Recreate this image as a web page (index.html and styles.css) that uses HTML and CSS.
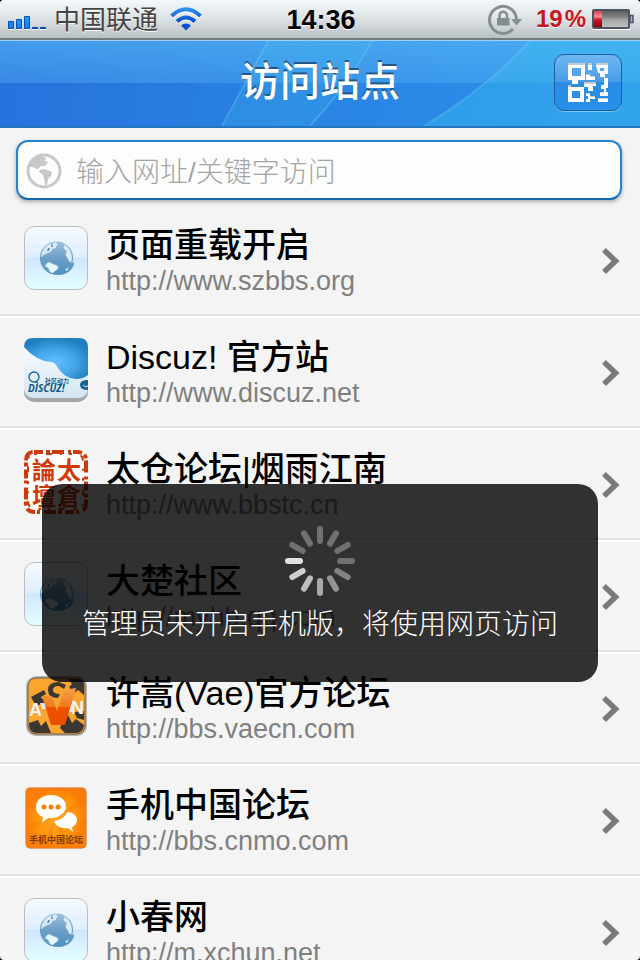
FILE: index.html
```html
<!DOCTYPE html>
<html lang="zh-CN">
<head>
  <meta charset="UTF-8" />
  <meta name="viewport" content="width=device-width, initial-scale=1.0"/>
  <title>访问站点</title>
  <link rel="stylesheet" href="styles.css">
</head>
<body>

<svg class="defs" aria-hidden="true">
  <defs>
    <linearGradient id="tile" x1="0" y1="0" x2="0" y2="1">
      <stop offset="0" stop-color="#f6faff"/>
      <stop offset=".48" stop-color="#dfeeff"/>
      <stop offset=".5" stop-color="#cfe6ff"/>
      <stop offset="1" stop-color="#e4ffff"/>
    </linearGradient>
    <linearGradient id="globe" x1="0" y1="0" x2="0" y2="1">
      <stop offset="0" stop-color="#9cc0da"/>
      <stop offset=".5" stop-color="#6c9fc6"/>
      <stop offset="1" stop-color="#4f90bd"/>
    </linearGradient>
    <radialGradient id="drop" cx=".48" cy=".6" r=".6">
      <stop offset="0" stop-color="#62c0ff"/>
      <stop offset=".5" stop-color="#46a8ea"/>
      <stop offset="1" stop-color="#1f7fbf"/>
    </radialGradient>
    <linearGradient id="pale" x1="0" y1="0" x2="0" y2="1">
      <stop offset="0" stop-color="#ffffff"/>
      <stop offset="1" stop-color="#d3e6f3"/>
    </linearGradient>
    <linearGradient id="vee" x1="0" y1="0" x2="0" y2="1">
      <stop offset="0" stop-color="#f5a04a"/>
      <stop offset=".5" stop-color="#f07a1c"/>
      <stop offset=".52" stop-color="#ee5200"/>
      <stop offset="1" stop-color="#e84e00"/>
    </linearGradient>
    <radialGradient id="orange">
      <stop offset="0" stop-color="#ffa92a"/>
      <stop offset=".7" stop-color="#ff9408"/>
      <stop offset="1" stop-color="#fb7d0a"/>
    </radialGradient>
    <linearGradient id="bar" x1="0" y1="0" x2="0" y2="1">
      <stop offset="0" stop-color="#1f9cff"/>
      <stop offset="1" stop-color="#1a7cf0"/>
    </linearGradient>
    <linearGradient id="wave" x1="0" y1="0" x2="0" y2="1">
      <stop offset="0" stop-color="#2f8ee6"/>
      <stop offset="1" stop-color="#0a4fd0"/>
    </linearGradient>
    <linearGradient id="cell" x1="0" y1="0" x2="0" y2="1">
      <stop offset="0" stop-color="#555"/>
      <stop offset=".45" stop-color="#8a8a8a"/>
      <stop offset=".5" stop-color="#a2a2a2"/>
      <stop offset="1" stop-color="#c4c4c4"/>
    </linearGradient>
    <linearGradient id="charge" x1="0" y1="0" x2="0" y2="1">
      <stop offset="0" stop-color="#d84050"/>
      <stop offset=".35" stop-color="#ff8b96"/>
      <stop offset=".55" stop-color="#c11722"/>
      <stop offset="1" stop-color="#8c0008"/>
    </linearGradient>
  </defs>

  <symbol id="site" viewBox="0 0 64 64">
    <rect x=".5" y=".5" width="63" height="63" rx="10" fill="url(#tile)" stroke="#b9bcc0"/>
    <circle cx="32.500" cy="32" r="16" fill="#dcebf8" stroke="url(#globe)" stroke-width="1.200"/>
    <path fill="url(#globe)" d="M16.500 32l3-3 4-2 3-1 2-3 3-1 2-4-2-2 7 0 2 3-1 3 3 3-1 4 2 3 2 4 3 1 2-1q-1 7-7 10.500-9 5-17.500 0Q17 41 16.500 32z"/>
    <path fill="url(#globe)" d="M27 18l2-1 0 4-2 0zM24 22l2 0-1 3-2 0z"/>
    <path fill="#e6f6ff" d="M22 38l3-2 4 2 5 2 0 3-3 2-2 2-3-1-2-4-3-2zM41 44l4-3-2 4z"/>
  </symbol>

  <symbol id="chevron" viewBox="0 0 18 26">
    <path d="M2 2 13.500 13 2 24" fill="none" stroke="#7a7a7a" stroke-width="5.500"/>
  </symbol>
</svg>

<div class="screen">

  <div class="status">
    <div class="status-side">
      <svg class="signal" viewBox="0 0 38 16" aria-hidden="true">
        <g fill="url(#bar)" stroke="#0c4fae">
          <path d="M.5 6.500h5v7H.5zM8.500 4.500h5v9h-5zM16.500 1.500h5v12h-5z"/>
        </g>
        <path fill="#0b47b5" d="M24 12h6v2h-6zM32 12h6v2h-6z"/>
        <path fill="#fff" d="M0 14h6v1H0zM8 14h6v1H8zM16 14h6v1h-6zM24 14h6v1h-6zM32 14h6v1h-6z"/>
      </svg>
      <span class="carrier">中国联通</span>
      <svg class="wifi" viewBox="0 0 32 25" aria-hidden="true">
        <g fill="none" stroke="#fff" stroke-width="4" transform="translate(0 1)">
          <path d="M1.500 9Q16-4 30.500 9M7 14.500q9-8 18 0"/>
        </g>
        <g fill="none" stroke="url(#wave)" stroke-width="4">
          <path d="M1.500 9Q16-4.500 30.500 9M7 14.500q9-8 18 0"/>
        </g>
        <path fill="#0a4fd0" d="M11 18.500q5-4 10 0L16 23.500z"/>
      </svg>
    </div>
    <span class="clock">14:36</span>
    <div class="status-side status-right">
      <svg class="rotation" viewBox="0 0 34 31" aria-hidden="true">
        <path d="M25 25A13.500 13.500 0 1 1 28.500 15" fill="none" stroke="#848d8f" stroke-width="3"/>
        <path fill="#848d8f" d="M23 15h11l-5.500 6.500zM9 14h12.500v7.500H9z"/>
        <path d="M11.500 15v-3.500a3.700 3.700 0 0 1 7.500 0V15" fill="none" stroke="#848d8f" stroke-width="2.500"/>
      </svg>
      <span class="percent">19<small>%</small></span>
      <svg class="battery" viewBox="0 0 42 21" aria-hidden="true">
        <path fill="#fff" d="M0 19h38v2H0z"/>
        <path fill="#a9b0bb" stroke="#4b5366" stroke-width="1.500" d="M38 6.500h3v7h-3z"/>
        <rect x="1" y="1" width="36" height="18" rx="1" fill="url(#cell)" stroke="#4b5366" stroke-width="2"/>
        <path fill="url(#charge)" d="M2 2h8v16H2z"/>
      </svg>
    </div>
  </div>

  <header class="topbar">
    <svg class="streaks" viewBox="0 0 640 86" preserveAspectRatio="none" aria-hidden="true">
      <path fill="#3fc0ea" opacity=".22" d="M268 0h104q-24 45-62 86h-88z"/>
      <path fill="#38c4ee" opacity=".35" d="M530 0h110v86H424q60-36 106-86z"/>
      <path fill="none" stroke="#7fd4f6" stroke-width="2" opacity=".3" d="M268 0 222 86M372 0q-24 45-62 86M530 0q-46 50-106 86"/>
    </svg>
    <h1>访问站点</h1>
    <button class="scan" type="button" aria-label="扫描二维码">
      <svg viewBox="0 0 40 40" aria-hidden="true">
        <path fill="#c9cdd1" fill-rule="evenodd" d="M0 0h17v17h-7v4H4v-4H0zM4 4v9h9V4zM20 0h4v7h-4zM28 0h12v11h-3v4h3v10h-2v4h2v4h-8v-4h4v-3h-3v-4h3v-8h-4v-4h-2zM32 4v4h4V4zM18 11h4v2h5v4h-9zM0 22h3v2h13v15H0zM4 28v7h8v-7zM16 19h12v4h-3v5h-5v-4h-4zM18 30h4v3h5v3h-5v3h-4v-3h2v-3h-2zM30 35h10v4H30z"/>
        <path fill="#fff" fill-rule="evenodd" d="M0 2h17v15h-7v4H4v-4H0zM4 5v8h9V5zM20 2h4v5h-4zM28 2h12v9h-3v4h3v10h-2v4h2v4h-8v-3h4v-4h-3v-4h3v-8h-4v-4h-2zM32 5v3h4V5zM18 12h4v2h5v3h-9zM0 24h16v15H0zM4 28v7h8v-7zM16 21h12v2h-3v5h-5v-4h-4zM18 31h4v3h5v2h-5v3h-4v-3h2v-3h-2zM30 36h10v3H30z"/>
      </svg>
    </button>
  </header>

  <form class="search">
    <label for="address">
      <svg viewBox="0 0 36 36" role="img" aria-label="网址">
        <circle cx="18" cy="18" r="16" fill="#fdfdfd" stroke="#c8c8c8" stroke-width="3"/>
        <path fill="#c8c8c8" d="M3 14Q6 4 16 3l4 2-1 3 3 1-3 4-4 0-3 3-2 0-3-2zM14 17l5-1 7 3-1 4-3 3-1 6-2 0-1-7-1-3-4-3z"/>
      </svg>
    </label>
    <input id="address" type="text" placeholder="输入网址/关键字访问">
  </form>

  <ul class="sites">
    <li>
      <a href="http://www.szbbs.org">
        <svg class="icon" aria-hidden="true"><use href="#site"/></svg>
        <span class="info"><strong>页面重载开启</strong><span class="url">http://www.szbbs.org</span></span>
        <svg class="arrow" aria-hidden="true"><use href="#chevron"/></svg>
      </a>
    </li>
    <li>
      <a href="http://www.discuz.net">
        <svg class="icon" viewBox="0 0 64 64" aria-hidden="true">
          <rect y="6" width="64" height="58" rx="10" fill="#a4a7a9"/>
          <rect width="64" height="60" rx="9" fill="url(#pale)"/>
          <path fill="url(#drop)" d="M0 9Q0 0 9 0h46q9 0 9 9v28q-5 4-12 4-12-1-18-11-3-6-7-6Q12 23 0 9z"/>
          <circle cx="10" cy="39" r="5" fill="none" stroke="#17628f" stroke-width="1.300"/>
          <path d="M11 44l3 1-1 2" fill="none" stroke="#17628f"/>
          <path fill="#17628f" d="M64 42q-8 0-8 5t8 5z"/>
          <path d="M59 47q2 3 5 1" fill="none" stroke="#e2eff7"/>
          <text class="discuz-small" x="21" y="45">社区动力</text>
          <text class="discuz" x="4" y="54">DISCUZ!</text>
        </svg>
        <span class="info"><strong>Discuz! 官方站</strong><span class="url">http://www.discuz.net</span></span>
        <svg class="arrow" aria-hidden="true"><use href="#chevron"/></svg>
      </a>
    </li>
    <li>
      <a href="http://www.bbstc.cn">
        <svg class="icon" viewBox="0 0 64 64" aria-hidden="true">
          <rect width="64" height="64" rx="10" fill="#fff"/>
          <path fill="none" stroke="#cf3a0c" stroke-width="4" stroke-dasharray="9 3 4 2 12 4 3 2" d="M10 2h43q9 0 9 9v42q0 9-9 9H11q-9 0-9-9V11q0-9 8-9z"/>
          <path fill="none" stroke="#cf3a0c" stroke-width="2" stroke-dasharray="3 9 6 8 2 7" d="M10 4h43q6 0 6 9v40q0 6-9 6H11q-7 0-7-9V11q0-7 8-7z"/>
          <text class="seal" x="8" y="29">論</text>
          <text class="seal" x="33" y="29">太</text>
          <text class="seal" x="8" y="55">壇</text>
          <text class="seal" x="33" y="55">倉</text>
        </svg>
        <span class="info"><strong>太仓论坛|烟雨江南</strong><span class="url">http://www.bbstc.cn</span></span>
        <svg class="arrow" aria-hidden="true"><use href="#chevron"/></svg>
      </a>
    </li>
    <li>
      <a href="http://myhb.qq.com">
        <svg class="icon" aria-hidden="true"><use href="#site"/></svg>
        <span class="info"><strong>大楚社区</strong><span class="url">http://myhb.qq.com</span></span>
        <svg class="arrow" aria-hidden="true"><use href="#chevron"/></svg>
      </a>
    </li>
    <li>
      <a href="http://bbs.vaecn.com">
        <svg class="icon" viewBox="0 0 64 64" aria-hidden="true">
          <rect x="2" y="2" width="61" height="60" rx="10" fill="#b5b5b5"/>
          <rect x="4" y="4" width="57" height="56" rx="8" fill="#fba531" stroke="#6b5a45"/>
          <g fill="#3b3733">
            <path d="M7 23l13-7 2 4-5 3 1 2 5-2 2 4-13 5zM44 5h11q5 0 5 7v9l-6-5-4 3-5-6 3-3zM5 49l9-3 3 6 5-5 5 12H12q-7-1-7-8zM38 48l6-7 4 8 4-4 8 6q-1 8-8 8H41l-5-5zM50 38l10-1v9l-7-2z"/>
            <path d="M35 8q-11 0-11 8t10 8l2-4q-7 0-7-4t6-4l5 3 2-4z"/>
          </g>
          <text class="vae" x="5" y="42">A</text>
          <text class="vae" x="47" y="40">N</text>
          <path fill="#e8e8e8" d="M16 29h7v6h-5zM40 30h8v8h-9z"/>
          <path fill="url(#vee)" d="M18 22h10l5 15 7-21 12-2-11 37H27z"/>
        </svg>
        <span class="info"><strong>许嵩(Vae)官方论坛</strong><span class="url">http://bbs.vaecn.com</span></span>
        <svg class="arrow" aria-hidden="true"><use href="#chevron"/></svg>
      </a>
    </li>
    <li>
      <a href="http://bbs.cnmo.com">
        <svg class="icon" viewBox="0 0 64 64" aria-hidden="true">
          <rect x="1" y="1" width="62" height="62" rx="5" fill="#d5d3d6"/>
          <rect x="2" y="2" width="60" height="60" rx="4" fill="url(#orange)" stroke="#f07c1c"/>
          <path fill="#f57b00" opacity=".35" d="M32 32 2 12v8zM32 32 14 2h8zM32 32 38 2h7zM32 32 62 8v9zM32 32l30 0v8zM32 32 2 38v8zM32 32 48 62H39zM32 32 24 62h-9z"/>
          <path fill="#fff" d="M27 9c9 0 15 5 15 11s-6 12-15 12l-3 0-6 5 1-6c-5-2-7-6-7-10 0-7 6-12 15-12z"/>
          <path fill="#fff" d="M30 35q10-1 13-9c6 0 10 4 10 8 0 3-2 6-5 7l1 5-5-4c-7 1-12-2-14-7z"/>
          <g fill="#f78200"><circle cx="20" cy="21" r="2.500"/><circle cx="27" cy="21" r="2.500"/><circle cx="34" cy="21" r="2.500"/></g>
          <text class="cnmo" x="5" y="57">手机中国论坛</text>
        </svg>
        <span class="info"><strong>手机中国论坛</strong><span class="url">http://bbs.cnmo.com</span></span>
        <svg class="arrow" aria-hidden="true"><use href="#chevron"/></svg>
      </a>
    </li>
    <li>
      <a href="http://m.xchun.net">
        <svg class="icon" aria-hidden="true"><use href="#site"/></svg>
        <span class="info"><strong>小春网</strong><span class="url">http://m.xchun.net</span></span>
        <svg class="arrow" aria-hidden="true"><use href="#chevron"/></svg>
      </a>
    </li>
  </ul>

  <div class="toast" role="status">
    <svg viewBox="-35 -35 70 70" aria-hidden="true">
      <g stroke-width="6" stroke-linecap="round">
        <path stroke="#707070" d="M0-20v-12"/>
        <path stroke="#707070" d="M0-20v-12" transform="rotate(30)"/>
        <path stroke="#707070" d="M0-20v-12" transform="rotate(60)"/>
        <path stroke="#707070" d="M0-20v-12" transform="rotate(90)"/>
        <path stroke="#838383" d="M0-20v-12" transform="rotate(120)"/>
        <path stroke="#959595" d="M0-20v-12" transform="rotate(150)"/>
        <path stroke="#a8a8a8" d="M0-20v-12" transform="rotate(180)"/>
        <path stroke="#bdbdbd" d="M0-20v-12" transform="rotate(210)"/>
        <path stroke="#cfcfcf" d="M0-20v-12" transform="rotate(240)"/>
        <path stroke="#e2e2e2" d="M0-20v-12" transform="rotate(270)"/>
        <path stroke="#707070" d="M0-20v-12" transform="rotate(300)"/>
        <path stroke="#707070" d="M0-20v-12" transform="rotate(330)"/>
      </g>
    </svg>
    <p>管理员未开启手机版，将使用网页访问</p>
  </div>

</div>

</body>
</html>
```
FILE: styles.css
```css
* {
  box-sizing: border-box;
}

body {
  margin: 0;
  background: #000;
  font-family: "Liberation Sans", "Noto Sans CJK SC", sans-serif;
}

.defs {
  position: absolute;
  width: 0;
  height: 0;
}

.screen {
  position: relative;
  height: 100vh;
  display: flex;
  flex-direction: column;
  overflow: hidden;
  background: #f4f4f4;
  border-radius: 4px;
}

/* status bar */
.status {
  flex: none;
  display: flex;
  align-items: center;
  height: 40px;
  padding: 0 6px 0 8px;
  background: linear-gradient(#f4f8fa, #dfe4e7 45%, #b9c0c4);
  border-bottom: 2px solid #737b80;
}

.status-side {
  flex: 1;
  display: flex;
  align-items: center;
}

.status-right {
  justify-content: flex-end;
}

.signal {
  width: 38px;
  height: 16px;
  margin: 8px 8px 0 0;
}

.carrier {
  padding-top: 2px;
  font-size: 26px;
  line-height: 38px;
  color: #444;
  text-shadow: 0 1px 0 #fff;
}

.wifi {
  width: 32px;
  height: 25px;
  margin-left: 12px;
}

.clock {
  padding-top: 2px;
  font-size: 27px;
  font-weight: bold;
  line-height: 38px;
  text-shadow: 0 1px 0 #fff;
}

.rotation {
  width: 34px;
  height: 31px;
}

.percent {
  margin: 0 6px 0 14px;
  font-size: 24px;
  font-weight: bold;
  color: #c8161c;
  text-shadow: 0 1px 0 #fff;
}

.percent small {
  margin-left: 2px;
  font-size: 24px;
}

.battery {
  width: 42px;
  height: 21px;
}

/* title bar */
.topbar {
  position: relative;
  flex: none;
  display: flex;
  align-items: center;
  justify-content: center;
  height: 88px;
  padding-bottom: 4px;
  background: linear-gradient(100deg, #2672dc, #2982e3 45%, #2c93ea);
  border-top: 1px solid #9fd0f2;
  border-bottom: 2px solid #2375bc;
}

.topbar::before {
  content: "";
  position: absolute;
  inset: 0;
  background: linear-gradient(rgba(100, 195, 250, .5), rgba(90, 180, 245, .35) 49%, transparent 50%);
}

.streaks {
  position: absolute;
  inset: 0;
  width: 100%;
  height: 100%;
}

.topbar h1 {
  position: relative;
  margin: 0;
  font-size: 40px;
  font-weight: 500;
  line-height: 80px;
  color: #fff;
  text-shadow: 0 -2px 0 #225784;
}

.scan {
  position: absolute;
  top: 13px;
  right: 18px;
  width: 68px;
  height: 57px;
  padding: 0;
  border: 1px solid #1c5f9e;
  border-radius: 10px;
  background: linear-gradient(#6fb6f2, #479de9 49%, #2b8de6 50%, #2690e8);
  box-shadow: 0 1px 0 #7cc6f5;
}

.scan svg {
  display: block;
  width: 40px;
  height: 40px;
  margin: 0 auto;
}

/* address box */
.search {
  flex: none;
  display: flex;
  align-items: center;
  height: 60px;
  margin: 12px 18px 6px 16px;
  padding: 2px 8px 0;
  background: #fdfdfd;
  border: 2px solid #2583cd;
  border-bottom-color: #1369ae;
  border-radius: 12px;
  box-shadow: 0 2px 4px rgba(0, 0, 0, .3);
}

.search label,
.search svg {
  display: block;
  width: 36px;
  height: 36px;
}

.search input {
  flex: 1;
  min-width: 0;
  margin-left: 14px;
  padding: 4px 0 0;
  border: 0;
  outline: 0;
  background: none;
  font: 300 28px/40px "Liberation Sans", "Noto Sans CJK SC", sans-serif;
  color: #333;
}

.search input::placeholder {
  color: #a4a4a4;
}

/* site list */
.sites {
  flex: 1;
  min-height: 0;
  margin: 0;
  padding: 0;
  list-style: none;
  overflow: hidden;
}

.sites li {
  border-bottom: 2px solid #fff;
}

.sites a {
  display: flex;
  align-items: flex-start;
  height: 110px;
  padding: 20px 20px 0 24px;
  border-bottom: 2px solid #e2e2e2;
  color: #000;
  text-decoration: none;
}

.icon {
  flex: none;
  width: 64px;
  height: 64px;
}

.info {
  flex: 1;
  min-width: 0;
  margin-left: 18px;
}

.info strong {
  display: block;
  font-size: 34px;
  font-weight: 500;
  line-height: 38px;
}

.url {
  display: block;
  font-size: 27px;
  line-height: 34px;
  color: #808080;
}

.arrow {
  width: 18px;
  height: 26px;
  margin-top: 22px;
}

.discuz {
  font: italic bold 10px "Open Sans", sans-serif;
  fill: #12527f;
}

.discuz-small {
  font: bold 6px "Noto Sans CJK SC", sans-serif;
  fill: #17628f;
}

.seal {
  font: bold 24px "Noto Sans CJK TC", sans-serif;
  fill: #cf3a0c;
}

.vae {
  font: bold 18px "Liberation Sans", sans-serif;
  fill: #f2f2f2;
}

.cnmo {
  font: bold 9px "Noto Sans CJK SC", sans-serif;
  fill: #7d3c05;
}

/* loading message */
.toast {
  position: absolute;
  top: 484px;
  left: 42px;
  right: 42px;
  padding: 42px 20px 36px;
  border-radius: 20px;
  background: rgba(0, 0, 0, .8);
  color: #fff;
  text-align: center;
}

.toast svg {
  display: block;
  width: 70px;
  height: 70px;
  margin: 0 auto 8px;
}

.toast p {
  margin: 0;
  font-size: 28px;
  font-weight: 300;
  line-height: 42px;
}
```
